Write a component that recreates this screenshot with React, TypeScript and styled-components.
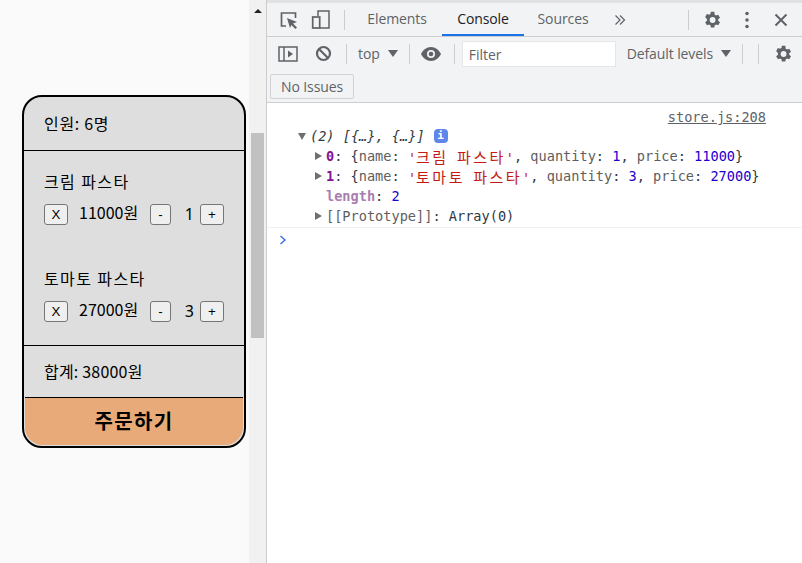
import React from "react";
import styled, { createGlobalStyle } from "styled-components";

const GlobalStyle = createGlobalStyle`
  html, body {
    margin: 0;
    padding: 0;
    width: 802px;
    height: 563px;
    overflow: hidden;
    background: #fff;
  }
`;

const Screen = styled.div`
  display: flex;
  width: 802px;
  height: 563px;
`;

const PagePane = styled.div`
  display: flex;
  width: 249px;
  height: 563px;
  background: #fafafa;
  padding: 95px 3px 0 22px;
  box-sizing: border-box;
  font-family: "Noto Sans CJK KR", "Noto Sans", sans-serif;
  color: #000;
`;

const Scrollbar = styled.div`
  width: 17px;
  height: 563px;
  background: #f1f1f1;
  display: flex;
  flex-direction: column;
  align-items: center;
`;

const ScrollArrow = styled.div`
  width: 0;
  height: 0;
  margin-top: 9px;
  border-left: 4px solid transparent;
  border-right: 4px solid transparent;
  border-bottom: 4px solid #222;
`;

const ScrollThumb = styled.div`
  width: 13px;
  height: 205px;
  margin-top: 120px;
  background: #c1c1c1;
`;

const Cart = styled.div`
  width: 224px;
  height: 353px;
  box-sizing: border-box;
  border: 2px solid #000;
  border-radius: 20px;
  background: #dedede;
  overflow: hidden;
  display: flex;
  flex-direction: column;
`;

const Section = styled.div<{ $height: number; $line?: boolean }>`
  height: ${(p) => p.$height}px;
  box-sizing: border-box;
  padding: 0 20px;
  border-bottom: ${(p) => (p.$line ? "1px solid #000" : "none")};
`;

const Summary = styled(Section)<{ $spacing: number }>`
  display: flex;
  align-items: center;
  padding-bottom: 2px;
  font-size: 16px;
  letter-spacing: ${(p) => p.$spacing}px;
`;

const Item = styled.div`
  height: 97px;
`;

const ItemName = styled.div`
  font-size: 16px;
  line-height: 24px;
  padding-top: 18px;
  letter-spacing: 1.4px;
`;

const ItemRow = styled.div`
  display: flex;
  align-items: center;
  margin-top: 9px;
  height: 24px;
  font-size: 16px;
`;

const SmallButton = styled.button<{ $width: number }>`
  width: ${(p) => p.$width}px;
  height: 21px;
  padding: 0;
  flex-shrink: 0;
  box-sizing: border-box;
  border: 1px solid #767676;
  border-radius: 3px;
  background: #efefef;
  color: #000;
  font-family: "Liberation Sans", sans-serif;
  font-size: 13.3px;
`;

const Price = styled.span`
  width: 71px;
  margin-left: 11px;
  position: relative;
  top: -2px;
`;

const Quantity = styled.span`
  width: 23px;
  margin-right: 6px;
  text-align: right;
  font-family: "Noto Sans", sans-serif;
`;

const OrderButton = styled.div`
  flex: 1;
  margin: 0 1px 1px 1px;
  background: #e8aa78;
  border-top: 1px solid #000;
  border-radius: 0 0 18px 18px;
  display: flex;
  align-items: center;
  justify-content: center;
  font-size: 20px;
  font-weight: 700;
  letter-spacing: 1.3px;
  padding-bottom: 2px;
`;

const DevTools = styled.div`
  flex: 1;
  border-left: 1px solid #ccc;
  display: flex;
  flex-direction: column;
  font-family: "Open Sans", "Noto Sans", sans-serif;
  background: #fff;
`;

const Toolbar = styled.div<{ $height: number; $line?: boolean }>`
  height: ${(p) => p.$height}px;
  box-sizing: border-box;
  background: #f1f3f4;
  display: flex;
  align-items: center;
  flex-shrink: 0;
  border-bottom: ${(p) => (p.$line ? "1px solid #cbcdd0" : "none")};
`;

const TopEdge = styled.div`
  height: 3px;
  background: #dfe1e5;
`;

const Divider = styled.div<{ $left: number; $right?: number }>`
  width: 1px;
  height: 20px;
  background: #cbcdd0;
  margin: 0 ${(p) => p.$right ?? 0}px 0 ${(p) => p.$left}px;
  flex-shrink: 0;
`;

const Tab = styled.div<{ $active?: boolean; $width: number }>`
  width: ${(p) => p.$width}px;
  height: 33px;
  box-sizing: border-box;
  display: flex;
  align-items: center;
  justify-content: center;
  font-size: 14px;
  color: ${(p) => (p.$active ? "#202124" : "#5f6368")};
  border-bottom: 2px solid ${(p) => (p.$active ? "#1a73e8" : "transparent")};
  letter-spacing: -0.1px;
`;

const IconSlot = styled.svg<{ $left?: number }>`
  display: block;
  flex-shrink: 0;
  margin-left: ${(p) => p.$left ?? 0}px;
`;

const ToolLabel = styled.span<{ $left: number }>`
  margin-left: ${(p) => p.$left}px;
  font-size: 14px;
  color: #5f6368;
  letter-spacing: -0.1px;
`;

const Caret = styled.div<{ $left: number }>`
  width: 0;
  height: 0;
  margin-left: ${(p) => p.$left}px;
  border-left: 5px solid transparent;
  border-right: 5px solid transparent;
  border-top: 7px solid #5f6368;
`;

const FilterInput = styled.div`
  width: 154px;
  height: 26px;
  margin-left: 7px;
  box-sizing: border-box;
  background: #fff;
  border: 1px solid #e4e6e8;
  padding-left: 6px;
  font-size: 14px;
  line-height: 26px;
  color: #5f6368;
  flex-shrink: 0;
`;

const IssuesButton = styled.div`
  margin-left: 3px;
  width: 84px;
  height: 25px;
  box-sizing: border-box;
  border: 1px solid #d0d2d5;
  border-radius: 2px;
  font-size: 14px;
  color: #5f6368;
  display: flex;
  align-items: center;
  justify-content: center;
  letter-spacing: -0.1px;
`;

const Console = styled.div`
  flex: 1;
  font-family: "DejaVu Sans Mono", "Noto Sans CJK KR", monospace;
  font-size: 13.6px;
  color: #303942;
`;

const LogEntry = styled.div`
  height: 125px;
  box-sizing: border-box;
  border-bottom: 1px solid #f0f0f0;
`;

const SourceLink = styled.div`
  height: 23px;
  padding: 6px 36px 0 0;
  box-sizing: border-box;
  text-align: right;
  line-height: 17px;
  color: #5f6368;
  text-decoration: underline;
`;

const Line = styled.div<{ $indent: number }>`
  display: flex;
  align-items: center;
  height: 20px;
  padding-left: ${(p) => p.$indent}px;
  white-space: pre;
`;

const Arrow = styled.div<{ $open?: boolean }>`
  width: 0;
  height: 0;
  margin-right: 4px;
  ${(p) =>
    p.$open
      ? `border-left: 4.5px solid transparent; border-right: 4.5px solid transparent; border-top: 7px solid #6e6e6e;`
      : `border-top: 4.5px solid transparent; border-bottom: 4.5px solid transparent; border-left: 7px solid #6e6e6e;`}
`;

const Index = styled.span<{ $dim?: boolean }>`
  color: ${(p) => (p.$dim ? "#a97db0" : "#881391")};
  font-weight: 700;
`;

const Key = styled.span`
  color: #5e5e5e;
`;

const Str = styled.span`
  color: #c41a16;
`;

const Hangul = styled.span`
  font-size: 15px;
  letter-spacing: 2.5px;
  word-spacing: -3.3px;
`;

const Num = styled.span`
  color: #1c00cf;
`;

const Italic = styled.span`
  font-style: italic;
`;

const InfoBadge = styled.span`
  width: 14px;
  height: 14px;
  margin-left: 9px;
  border-radius: 4px;
  background: #5f86ea;
  color: #fff;
  font-size: 11px;
  font-weight: 700;
  line-height: 14px;
  text-align: center;
`;

const Prompt = styled.svg`
  display: block;
  margin: 7px 0 0 12px;
`;

const GearIcon = ({ left }: { left: number }) => (
  <IconSlot $left={left} width="20" height="20" viewBox="0 0 24 24" fill="#5f6368">
    <path
      fillRule="evenodd"
      d="M19.4 13a7.6 7.6 0 0 0 0-2l2.2-1.7-2.1-3.6-2.6 1a7.6 7.6 0 0 0-1.7-1L14.8 2h-4.2l-.4 2.7a7.6 7.6 0 0 0-1.7 1l-2.6-1-2.1 3.6L6 11a7.6 7.6 0 0 0 0 2l-2.2 1.7 2.1 3.6 2.6-1a7.6 7.6 0 0 0 1.7 1l.4 2.7h4.2l.4-2.7a7.6 7.6 0 0 0 1.7-1l2.6 1 2.1-3.6zM12.7 15.5a3.5 3.5 0 1 1 0-7 3.5 3.5 0 0 1 0 7z"
    />
  </IconSlot>
);

const items = [
  { name: "크림 파스타", price: 11000, quantity: 1 },
  { name: "토마토 파스타", price: 27000, quantity: 3 },
];

const App = () => {
  return (
    <Screen>
      <GlobalStyle />
      <PagePane>
        <Cart>
          <Summary $height={54} $line $spacing={0.7}>
            인원: 6명
          </Summary>
          <Section $height={195} $line>
            {items.map((item) => (
              <Item key={item.name}>
                <ItemName>{item.name}</ItemName>
                <ItemRow>
                  <SmallButton $width={24}>X</SmallButton>
                  <Price>{item.price}원</Price>
                  <SmallButton $width={21}>-</SmallButton>
                  <Quantity>{item.quantity}</Quantity>
                  <SmallButton $width={24}>+</SmallButton>
                </ItemRow>
              </Item>
            ))}
          </Section>
          <Summary $height={51} $spacing={0.2}>
            합계: 38000원
          </Summary>
          <OrderButton>주문하기</OrderButton>
        </Cart>
      </PagePane>
      <Scrollbar>
        <ScrollArrow />
        <ScrollThumb />
      </Scrollbar>
      <DevTools>
        <TopEdge />
        <Toolbar $height={34} $line>
          <IconSlot $left={12} width="21" height="20" viewBox="0 0 21 20" fill="none">
            <path d="M7 16H2.5V3h14v5" stroke="#5f6368" strokeWidth="1.7" />
            <path d="M8 8l10 4-4 1.5 4 4-1.6 1.6-4-4L11 18z" fill="#5f6368" />
          </IconSlot>
          <IconSlot $left={11} width="20" height="21" viewBox="0 0 20 21" fill="none">
            <path d="M7 7V2h11v17H9" stroke="#5f6368" strokeWidth="1.5" />
            <rect x="1.7" y="8" width="7" height="11" stroke="#5f6368" strokeWidth="1.7" />
          </IconSlot>
          <Divider $left={13} $right={7} />
          <Tab $width={90}>Elements</Tab>
          <Tab $width={82} $active>
            Console
          </Tab>
          <Tab $width={78}>Sources</Tab>
          <IconSlot $left={12} width="12" height="12" viewBox="0 0 12 12" fill="none">
            <path d="M1.5 1.5L6 6l-4.5 4.5M6 1.5L10.5 6 6 10.5" stroke="#5f6368" strokeWidth="1.2" />
          </IconSlot>
          <Divider $left={62} />
          <GearIcon left={13} />
          <IconSlot $left={23} width="4" height="18" viewBox="0 0 4 18" fill="#5f6368">
            <circle cx="2" cy="2.5" r="1.8" />
            <circle cx="2" cy="9" r="1.8" />
            <circle cx="2" cy="15.5" r="1.8" />
          </IconSlot>
          <IconSlot $left={25} width="14" height="14" viewBox="0 0 14 14" fill="none">
            <path d="M1.5 1.5l11 11M12.5 1.5l-11 11" stroke="#5f6368" strokeWidth="2" />
          </IconSlot>
        </Toolbar>
        <Toolbar $height={33}>
          <IconSlot $left={11} width="20" height="16" viewBox="0 0 20 16" fill="none">
            <rect x="1" y="1" width="18" height="14" stroke="#5f6368" strokeWidth="1.5" />
            <path d="M6 1v14" stroke="#5f6368" strokeWidth="1.5" />
            <path d="M10 4.5l5 3.5-5 3.5z" fill="#5f6368" />
          </IconSlot>
          <IconSlot $left={17} width="17" height="17" viewBox="0 0 17 17" fill="none">
            <circle cx="8.5" cy="8.5" r="6.5" stroke="#5f6368" strokeWidth="2.2" />
            <path d="M4 4l9 9" stroke="#5f6368" strokeWidth="2.2" />
          </IconSlot>
          <Divider $left={14} />
          <ToolLabel $left={11}>top</ToolLabel>
          <Caret $left={8} />
          <Divider $left={11} />
          <IconSlot $left={11} width="20" height="14" viewBox="0 0 20 14" fill="none">
            <path
              fillRule="evenodd"
              d="M10 0C5.5 0 2 3 0 7c2 4 5.5 7 10 7s8-3 10-7c-2-4-5.5-7-10-7zm0 11a4 4 0 1 1 0-8 4 4 0 0 1 0 8z"
              fill="#5f6368"
            />
            <circle cx="10" cy="7" r="2.3" fill="#5f6368" />
          </IconSlot>
          <Divider $left={13} />
          <FilterInput>Filter</FilterInput>
          <ToolLabel $left={11}>Default levels</ToolLabel>
          <Caret $left={8} />
          <Divider $left={11} />
          <Divider $left={15} />
          <GearIcon left={14} />
        </Toolbar>
        <Toolbar $height={33} $line>
          <IssuesButton>No Issues</IssuesButton>
        </Toolbar>
        <Console>
          <LogEntry>
            <SourceLink>store.js:208</SourceLink>
            <Line $indent={31}>
              <Arrow $open />
              <Italic>(2) [{"{…}"}, {"{…}"}]</Italic>
              <InfoBadge>i</InfoBadge>
            </Line>
            <Line $indent={48}>
              <Arrow />
              <Index>0</Index>: {"{"}<Key>name</Key>: <Str>'<Hangul>크림 파스타</Hangul>'</Str>, <Key>quantity</Key>: <Num>1</Num>, <Key>price</Key>: <Num>11000</Num>{"}"}
            </Line>
            <Line $indent={48}>
              <Arrow />
              <Index>1</Index>: {"{"}<Key>name</Key>: <Str>'<Hangul>토마토 파스타</Hangul>'</Str>, <Key>quantity</Key>: <Num>3</Num>, <Key>price</Key>: <Num>27000</Num>{"}"}
            </Line>
            <Line $indent={59}>
              <Index $dim>length</Index>: <Num>2</Num>
            </Line>
            <Line $indent={48}>
              <Arrow />
              <Key>[[Prototype]]</Key>: Array(0)
            </Line>
          </LogEntry>
          <Prompt width="8" height="10" viewBox="0 0 8 10" fill="none">
            <path d="M1.5 1l4.5 4-4.5 4" stroke="#3a72e0" strokeWidth="1.5" />
          </Prompt>
        </Console>
      </DevTools>
    </Screen>
  );
};

export default App;
